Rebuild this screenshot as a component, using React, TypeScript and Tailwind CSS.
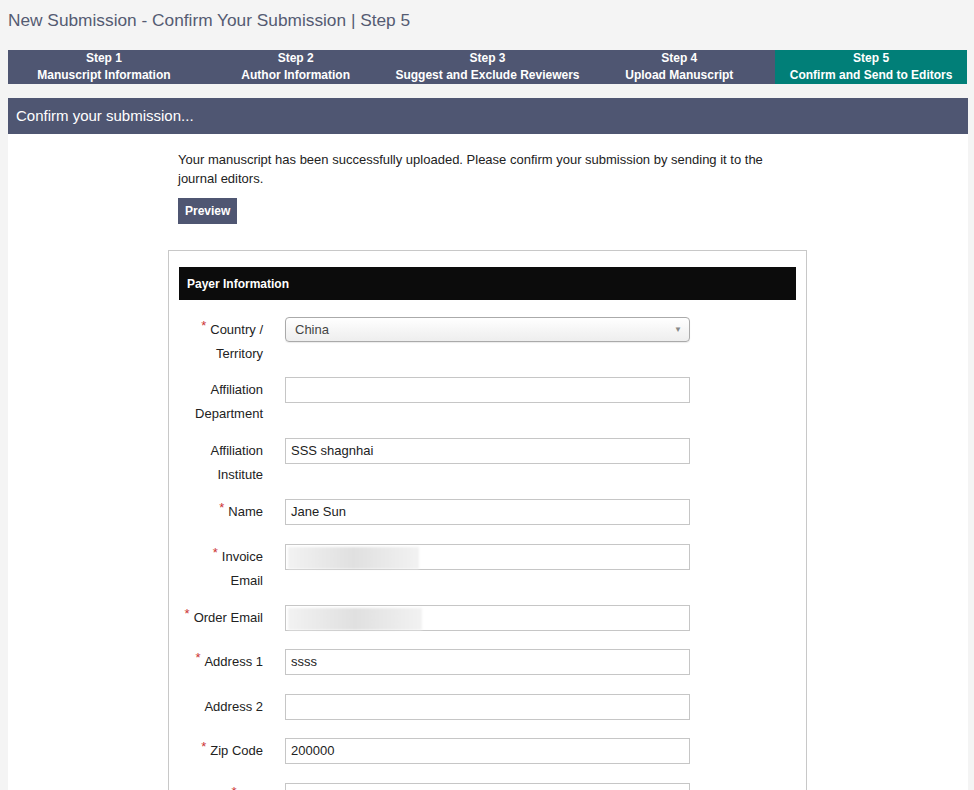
import React from "react";

const steps = [
  ["Step 1", "Manuscript Information"],
  ["Step 2", "Author Information"],
  ["Step 3", "Suggest and Exclude Reviewers"],
  ["Step 4", "Upload Manuscript"],
  ["Step 5", "Confirm and Send to Editors"],
];

function Star() {
  return <span className="relative -top-[4px] mr-[4px] text-[13px] text-[#cc3333]">*</span>;
}

type Row = {
  lines: string[];
  req?: boolean;
  value?: string;
  blur?: number;
  select?: boolean;
};

const rows: Row[] = [
  { lines: ["Country /", "Territory"], req: true, select: true, value: "China" },
  { lines: ["Affiliation", "Department"] },
  { lines: ["Affiliation", "Institute"], value: "SSS shagnhai" },
  { lines: ["Name"], req: true, value: "Jane Sun" },
  { lines: ["Invoice", "Email"], req: true, blur: 131 },
  { lines: ["Order Email"], req: true, blur: 134 },
  { lines: ["Address 1"], req: true, value: "ssss" },
  { lines: ["Address 2"] },
  { lines: ["Zip Code"], req: true, value: "200000" },
  { lines: ["City"], req: true },
];

function FormRow({ r }: { r: Row }) {
  return (
    <div className="flex items-start">
      <div
        className={`w-[84px] shrink-0 pt-px text-right text-[13px] leading-[24px] text-[#222] whitespace-nowrap ${
          r.select ? "pb-[11px]" : "pb-[12px]"
        }`}
      >
        {r.lines.map((l, i) => (
          <div key={i}>
            {i === 0 && r.req ? <Star /> : null}
            {l}
          </div>
        ))}
      </div>
      <div className="ml-[22px] pb-[18.5px]">
        {r.select ? (
          <div className="relative flex h-[25px] w-[405px] items-center rounded-[4px] border border-[#aaaaaa] bg-gradient-to-b from-[#ffffff] via-[#f6f6f6] to-[#eeeeee] pl-[9px] text-[13px] text-[#444] shadow-[0_1px_1px_rgba(0,0,0,0.08)]">
            {r.value}
            <span className="absolute right-[7px] top-[6px] text-[8px] text-[#888]">▼</span>
          </div>
        ) : (
          <div className="relative flex h-[26px] w-[405px] items-center border border-[#c6c6c6] bg-white pl-[5px] text-[13px] text-[#222]">
            {r.value}
            {r.blur ? (
              <div
                className="absolute left-[2px] top-[2px] h-[22px] bg-gradient-to-r from-[#f2f2f2] via-[#e0e0e0] to-[#f2f2f2] blur-[1px]"
                style={{ width: r.blur }}
              />
            ) : null}
          </div>
        )}
      </div>
    </div>
  );
}

export default function App() {
  return (
    <div className="min-h-[790px] w-[974px] overflow-hidden bg-[#f4f4f4] px-[8px] font-['Liberation_Sans',Arial,sans-serif]">
      <div className="h-[50px] pt-[9px] text-[17.3px] leading-[22px] text-[#545b72]">
        New Submission - Confirm Your Submission | Step 5
      </div>
      <div className="grid h-[34px] w-[959px] grid-cols-5 bg-[#4f5672]">
        {steps.map(([a, b], i) => (
          <div
            key={i}
            className={`flex flex-col items-center justify-center text-[12px] font-bold leading-[17px] text-white ${
              i === 4 ? "bg-[#017f78]" : ""
            }`}
          >
            <div>{a}</div>
            <div>{b}</div>
          </div>
        ))}
      </div>
      <div className="mt-[14px] flex h-[36px] w-[960px] items-center bg-[#4f5672] pl-[8px] text-[15px] text-white">
        Confirm your submission...
      </div>
      <div className="h-[660px] w-[960px] bg-white pt-[16px]">
        <div className="ml-[160px] w-[639px]">
          <p className="px-[10px] text-[13px] leading-[19px] text-[#222]">
            Your manuscript has been successfully uploaded. Please confirm your submission by sending it to the journal editors.
          </p>
          <button className="ml-[10px] mt-[10px] h-[26px] bg-[#4f5672] px-[7px] text-[12px] font-bold text-white">
            Preview
          </button>
          <div className="mt-[26px] border border-[#c8c8c8] px-[10px] pt-[16px]">
            <div className="flex h-[33px] items-center bg-[#0c0c0c] pl-[8px] text-[12px] font-bold text-white">
              Payer Information
            </div>
            <div className="pt-[17px]">
              {rows.map((r, i) => (
                <FormRow key={i} r={r} />
              ))}
            </div>
          </div>
        </div>
      </div>
    </div>
  );
}
